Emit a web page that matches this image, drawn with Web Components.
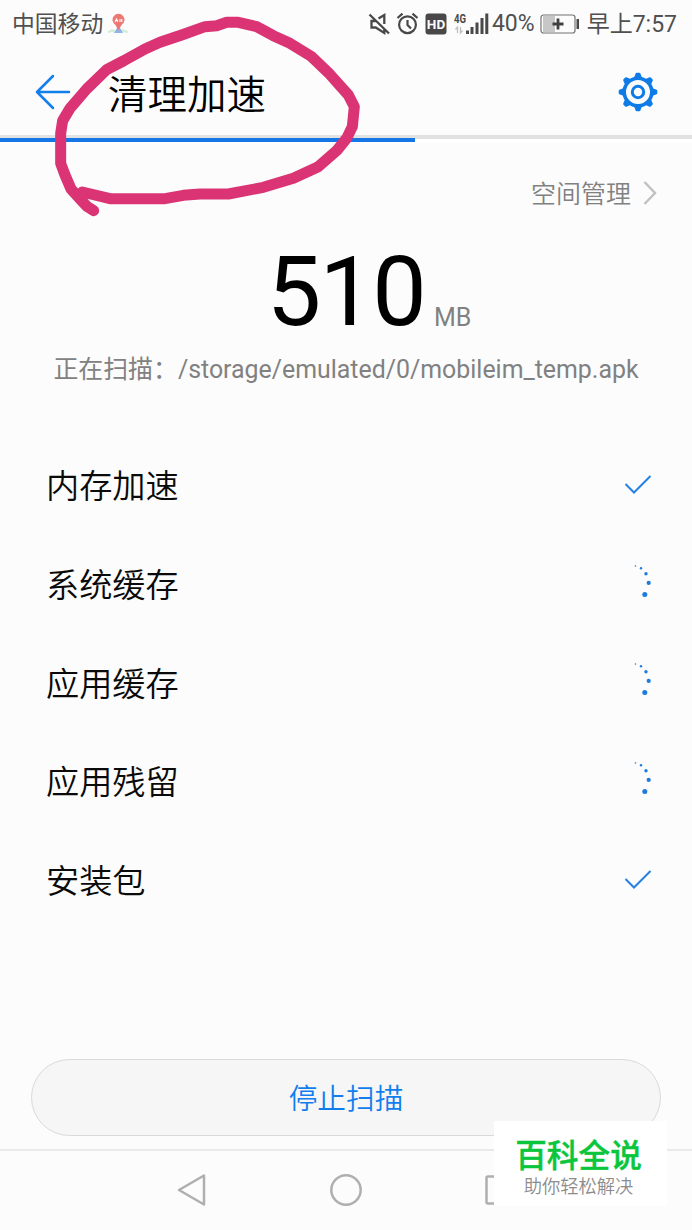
<!DOCTYPE html>
<html lang="zh-CN">
<head>
<meta charset="utf-8">
<title>清理加速</title>
<style>
  html, body {
    margin: 0;
    height: 100%;
    background: #fcfcfc;
    font-family: Roboto, "Noto Sans CJK SC", sans-serif;
  }
</style>
</head>
<body>
<cleaner-app></cleaner-app>

<script>
const define = (name, html) => {
  const template = document.createElement('template')
  template.innerHTML = html

  customElements.define(name, class extends HTMLElement {
    constructor() {
      super()
      this.attachShadow({ mode: 'open' })
      this.shadowRoot.appendChild(template.content.cloneNode(true))
    }
  })
}

define('status-bar', `<style>
  :host {
    display: flex;
    align-items: center;
    height: 47px;
    padding: 0 15px 0 12px;
    box-sizing: border-box;
    color: #505050;
    font-size: 23px;
    line-height: 47px;
    white-space: nowrap;
  }

  svg {
    display: block;
    flex: none;
  }

  .carrier {
    font-size: 22.8px;
    margin-right: 4px;
    padding-top: 2px;
  }

  .right {
    display: flex;
    align-items: center;
    margin-left: auto;
  }

  .signal { margin: 0 3px 0 7px; }
  .battery { margin: 0 7px 0 5px; }
  .clock { padding-top: 2px; }
</style>
<span class="carrier">中国移动</span>
<svg width="22" height="22" viewBox="0 0 22 22">
  <path d="M1 18l4-2 5 2 5-2 6 2v2l-6-1-5 1-5-1-4 1z" fill="#d3edd9"/>
  <path d="M7 20l3-5h3l3 5z" fill="#8cb4ee"/>
  <path d="M11.500 17.500L8.500 12a6 6 0 1 1 6 0z" fill="#ed7771"/>
  <path d="M8 9l1.500-3L11 9M13 6v3M14.800 6v3" stroke="#fff" stroke-width="1.100" fill="none"/>
</svg>
<div class="right">
  <svg width="23" height="24" viewBox="0 0 23 24" fill="none" stroke="#484848" stroke-width="2.300">
    <path d="M1.500 2.500l19.500 19M10.500 6.500L16.300 3v9M7.500 9H3.500v6.500h4.200l8.600 5.500v-4"/>
  </svg>
  <svg style="margin-left:5px" width="23" height="24" viewBox="0 0 23 24" fill="none" stroke="#484848" stroke-width="2.200">
    <circle cx="11.500" cy="12.700" r="8.400"/>
    <path d="M11.500 8v5l3.500 3.500M1.500 6l5-4.300M21.500 6l-5-4.300"/>
  </svg>
  <svg style="margin-left:6px" width="22" height="22" viewBox="0 0 22 22">
    <rect x=".5" y=".5" width="21" height="21" rx="3" fill="#484848"/>
    <text x="11" y="15.800" text-anchor="middle" font-family="Roboto" font-weight="700" font-size="13.500" fill="#fff">HD</text>
  </svg>
  <svg class="signal" width="35" height="24" viewBox="0 0 35 24" fill="#484848">
    <text x="0" y="10.500" font-family="Roboto" font-weight="700" font-size="13" textLength="12" lengthAdjust="spacingAndGlyphs">4G</text>
    <path d="M3.500 21v-6l-2 2.500M6.500 15v6l2-2.500" fill="none" stroke="#c0c0c0" stroke-width="1.300"/>
    <path d="M12 18.500h3V22h-3zM16.500 15h3v7h-3zM21.500 10.500h3V22h-3zM26.500 6h3v16h-3zM31.300 1.500h3V22h-3z"/>
  </svg>
  <span>40%</span>
  <svg class="battery" width="40" height="20" viewBox="0 0 40 20">
    <rect x="3" y="2" width="12" height="16" fill="#c7c7c7"/>
    <rect x="1" y="1" width="34" height="18" rx="2.500" fill="none" stroke="#737373" stroke-width="1.200"/>
    <path d="M36.500 5h2.500v10h-2.500z" fill="#484848"/>
    <path d="M18 4.500v11M12.500 10h11" stroke="#404040" stroke-width="2.800"/>
  </svg>
  <span class="clock">早上7:57</span>
</div>`)

define('title-bar', `<style>
  :host {
    display: flex;
    align-items: center;
    height: 88px;
    padding: 1px 34px 0;
    box-sizing: border-box;
  }

  h1 {
    flex: 1;
    margin: 9px 0 0 36px;
    color: #000;
    font-size: 39.500px;
    font-weight: 350;
    line-height: 60px;
  }
</style>
<svg width="38" height="38" viewBox="0 0 38 38" fill="none" stroke="#117fec" stroke-width="2.500" stroke-linecap="round" stroke-linejoin="round">
  <path d="M35 19H3M19 3L3 19l16 16"/>
</svg>
<h1><slot></slot></h1>
<svg width="40" height="40" viewBox="-20 -20 40 40" fill="none" stroke="#0f7be6">
  <g fill="#0f7be6" stroke="none">
    <path id="t" d="M-4-14l1.400-4q.4-1.300 1.400-1.300h2.400q1 0 1.400 1.300l1.400 4z"/>
    <use href="#t" transform="rotate(45)"/>
    <use href="#t" transform="rotate(90)"/>
    <use href="#t" transform="rotate(135)"/>
    <use href="#t" transform="rotate(180)"/>
    <use href="#t" transform="rotate(225)"/>
    <use href="#t" transform="rotate(270)"/>
    <use href="#t" transform="rotate(315)"/>
  </g>
  <circle r="13.800" stroke-width="3.600"/>
  <circle r="5.700" stroke-width="3"/>
</svg>`)

define('scan-progress', `<style>
  :host {
    display: block;
    height: 8px;
    background: linear-gradient(#e1e1e1 0 4px, #fff 4px);
  }

  .bar {
    width: 60%;
    height: 100%;
    background: linear-gradient(#e1e3e3 0 3px, #1577e6 3px 7px, #fff 7px);
  }
</style>
<div class="bar"></div>`)

define('space-link', `<style>
  :host {
    display: flex;
    justify-content: flex-end;
    align-items: center;
    height: 99px;
    padding-right: 34px;
    color: #818181;
    font-size: 25px;
    font-weight: 350;
  }

  .label { margin-bottom: 2px; }
  svg { margin-left: 11px; }
</style>
<span class="label"><slot></slot></span>
<svg width="16" height="26" viewBox="0 0 16 26" fill="none" stroke="#c1c1c1" stroke-width="2.500">
  <path d="M2.500 2L13 13 2.500 24"/>
</svg>`)

define('junk-size', `<style>
  :host {
    display: flex;
    align-items: baseline;
    justify-content: center;
    height: 103px;
    padding: 2px 0 0 46px;
    box-sizing: border-box;
    line-height: 96px;
  }

  .value {
    color: #000;
    font-size: 97px;
    letter-spacing: -1.800px;
  }

  .unit {
    position: relative;
    top: 1px;
    margin-left: 9px;
    color: #818181;
    font-size: 25px;
  }
</style>
<span class="value"><slot></slot></span>
<span class="unit"><slot name="unit"></slot></span>`)

define('scan-path', `<style>
  :host {
    display: block;
    height: 91.500px;
    color: #818181;
    font-size: 24.900px;
    line-height: 50px;
    text-align: center;
    white-space: nowrap;
  }
</style>
<slot></slot>`)

// shows a check by default, the spinner dots with the "scanning" attribute
define('scan-item', `<style>
  :host {
    display: flex;
    align-items: center;
    justify-content: space-between;
    height: 98.700px;
    padding: 0 34px 0 46px;
    color: #0a0a0a;
    font-size: 33.200px;
    font-weight: 350;
  }

  .label { margin-bottom: 4px; }
  .dots { display: none; }
  :host([scanning]) .dots { display: block; }
  :host([scanning]) .check { display: none; }
</style>
<span class="label"><slot></slot></span>
<svg class="check" width="40" height="40" viewBox="0 0 40 40" fill="none" stroke="#2483e2" stroke-width="2">
  <path d="M7.500 18l8.500 8.500L32.500 10"/>
</svg>
<svg class="dots" width="40" height="40" viewBox="0 0 40 40" fill="#1c7bdc">
  <circle cx="17.500" cy="1" r=".8"/>
  <circle cx="23" cy="3.200" r="1.200"/>
  <circle cx="28" cy="8.700" r="1.700"/>
  <circle cx="30.700" cy="17.900" r="2.100"/>
  <circle cx="26.800" cy="29.500" r="2.500"/>
</svg>`)

define('pill-button', `<style>
  :host { display: block; }

  button {
    display: block;
    width: 100%;
    height: 77px;
    padding: 0 0 2px;
    border: 1px solid #d9d9d9;
    border-radius: 39px;
    background: #f6f6f6;
    color: #117eee;
    font: inherit;
    font-size: 28.700px;
    font-weight: 350;
  }
</style>
<button><slot></slot></button>`)

define('nav-bar', `<style>
  :host {
    display: flex;
    align-items: center;
    justify-content: center;
    gap: 118px;
    height: 81px;
    padding-bottom: 2px;
    box-sizing: border-box;
    border-top: 2px solid #e9e9e9;
  }
</style>
<svg width="36" height="36" viewBox="0 0 36 36" fill="none" stroke="#afafaf" stroke-width="2.500" stroke-linejoin="round">
  <path d="M5 18L30 3.500v29z"/>
</svg>
<svg width="36" height="36" viewBox="0 0 36 36" fill="none" stroke="#afafaf" stroke-width="2.500">
  <circle cx="18" cy="18" r="14.700"/>
</svg>
<svg width="36" height="36" viewBox="0 0 36 36" fill="none" stroke="#afafaf" stroke-width="2.500">
  <rect x="4.500" y="4.500" width="27" height="27" rx="1.500"/>
</svg>`)

define('site-badge', `<style>
  :host {
    display: flex;
    flex-direction: column;
    align-items: center;
    width: 173px;
    height: 85px;
    padding: 16px 4px 0 0;
    box-sizing: border-box;
    background: #fff;
    white-space: nowrap;
  }

  .name {
    color: #0bc63c;
    font-size: 31.700px;
    font-weight: 500;
    line-height: 40px;
    -webkit-text-stroke: .4px #0bc63c;
  }

  .slogan {
    color: #8c8c8c;
    font-size: 18.300px;
    font-weight: 350;
    line-height: 20px;
  }
</style>
<div class="name"><slot></slot></div>
<div class="slogan"><slot name="slogan"></slot></div>`)

define('pen-circle', `<style>
  :host {
    display: block;
    pointer-events: none;
  }
</style>
<svg width="400" height="230" viewBox="0 0 1200 690" fill="none" stroke="#da3474" stroke-width="33" stroke-linecap="round" stroke-linejoin="round">
  <path d="M247 576L330 596H495L550 586 600 582H685L790 562 880 535 955 500 1010 452 1040 415 1057 380 1063 320 1045 285 985 218 935 170 870 130 820 107 770 80 715 67H680L650 77 615 80 545 105 480 127 435 147 370 183 320 209 260 267 210 325 188 362 182 400V490L195 525 213 567 245 602 262 620 281 632"/>
</svg>`)

define('cleaner-app', `<style>
  :host {
    position: relative;
    display: flex;
    flex-direction: column;
    width: 692px;
    height: 1230px;
    overflow: hidden;
    background: #fcfcfc;
  }

  main { flex: 1; }
  pill-button { margin: 0 31px 13px; }

  pen-circle {
    position: absolute;
    top: 0;
    left: 0;
  }

  site-badge {
    position: absolute;
    top: 1121px;
    left: 494px;
  }
</style>
<status-bar></status-bar>
<title-bar>清理加速</title-bar>
<scan-progress></scan-progress>
<main>
  <space-link>空间管理</space-link>
  <junk-size>510<span slot="unit">MB</span></junk-size>
  <scan-path>正在扫描：/storage/emulated/0/mobileim_temp.apk</scan-path>
  <scan-item>内存加速</scan-item>
  <scan-item scanning>系统缓存</scan-item>
  <scan-item scanning>应用缓存</scan-item>
  <scan-item scanning>应用残留</scan-item>
  <scan-item>安装包</scan-item>
</main>
<pill-button>停止扫描</pill-button>
<nav-bar></nav-bar>
<pen-circle></pen-circle>
<site-badge>百科全说<span slot="slogan">助你轻松解决</span></site-badge>`)
</script>
</body>
</html>
